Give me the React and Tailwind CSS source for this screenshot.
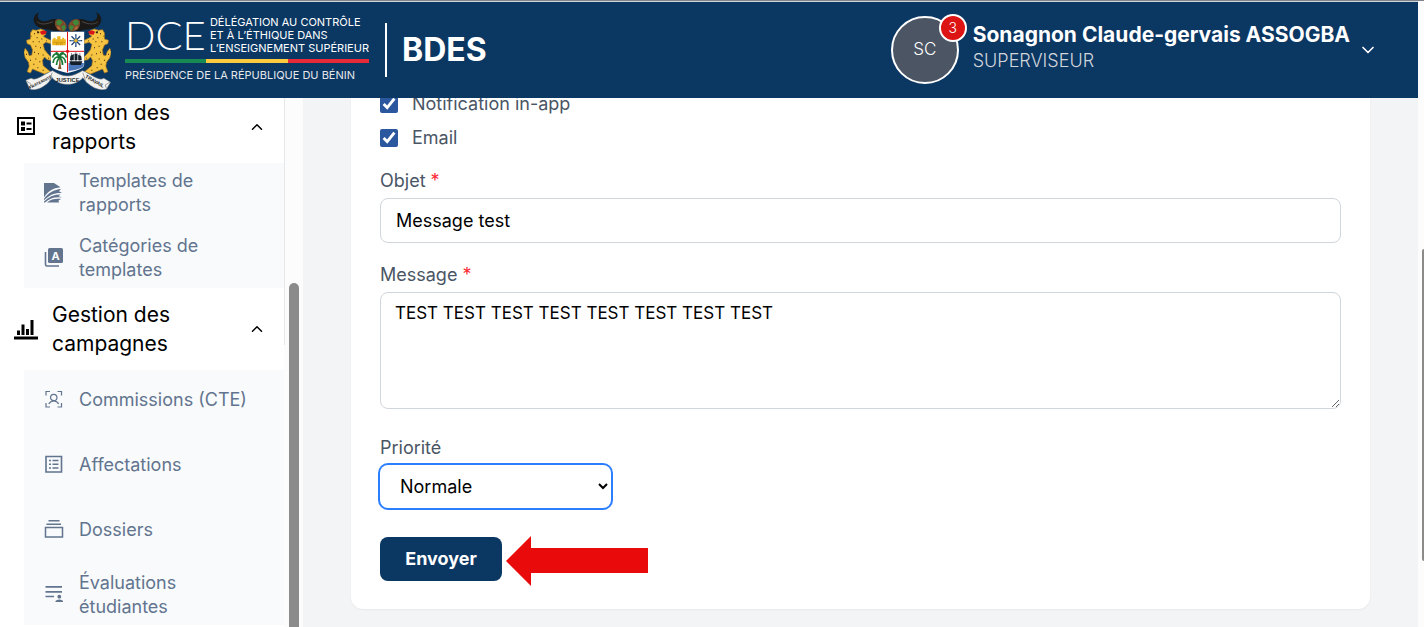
import React, { useState } from 'react'
import { ChevronDown, ChevronUp } from 'lucide-react'
import { ImStatsBars } from 'react-icons/im'

const Leopard = () => (
  <g>
    <path
      d="M46 84 L52 74 L64 76 L76 72 L88 76 L92 88 L84 94 L94 100 L107 106 L107 116 L92 112 L84 118 L88 134 L98 146 L107 156 L107 166 L96 164 L88 156 L82 166 L84 182 L96 192 L106 200 L88 207 L66 198 L52 192 L46 204 L36 200 L42 184 L40 172 L30 158 L26 142 L30 130 L38 140 L42 152 L50 150 L52 134 L46 120 L36 116 L34 106 L46 102 Z"
      fill="#f5c443"
      stroke="#a8741c"
      strokeWidth="2"
    />
    <path
      d="M58 84 v4 M66 96 v4 M54 108 v4 M72 108 v4 M62 122 v4 M76 126 v4 M58 140 v4 M70 144 v4 M84 148 v4 M62 160 v4 M74 168 v4 M56 176 v4 M68 186 v4 M84 194 v4 M94 106 v3 M46 164 v4 M34 146 v4 M48 92 v3 M80 100 v4 M100 158 v3"
      stroke="#6b4a12"
      strokeWidth="3"
    />
    <path d="M74 80 l10 -4 l12 4 l-6 8 l-11 1 z" fill="#d8141c" />
    <path d="M66 78 l6 2 v5 h-6 z" fill="#2a1c10" />
  </g>
)

const Horn = () => (
  <g>
    <path
      d="M71 22 C56 28 50 48 62 60 C74 74 100 72 118 78 L140 78 C144 62 136 44 122 42 C106 40 94 52 80 48 C68 44 65 34 71 22 Z"
      fill="#1b1918"
    />
    <path d="M66 50 C78 62 98 56 114 50" fill="none" stroke="#4a4643" strokeWidth="3" />
    <path d="M122 44 C134 38 148 44 154 60 C156 72 150 80 142 80 L128 74 C120 66 116 54 122 44 Z" fill="#7a4a28" />
    <path d="M124 48 l10 -4 l8 8 l-8 10 l-10 -4 z M138 64 l10 -4 l4 10 l-8 8 z" fill="#3f8a3a" />
    <path d="M126 64 l8 2 l2 8 l-8 -2 z M144 52 l5 4" fill="#b5653a" stroke="#b5653a" />
  </g>
)

const Emblem = () => (
  <svg viewBox="27 15 260 240" className="h-20 w-[87px] shrink-0" role="img" aria-label="Armoiries du Bénin">
    <Leopard />
    <g transform="translate(314 0) scale(-1 1)">
      <Leopard />
    </g>
    <path d="M107 80 H207 V178 C207 190 192 196 157 204 C122 196 107 190 107 178 Z" fill="#fff" />
    <path d="M160 174 H206 V180 C204 189 190 194 160 198 Z" fill="#4a78b8" />
    <Horn />
    <g transform="translate(314 0) scale(-1 1)">
      <Horn />
    </g>
    {/* castle */}
    <path d="M111 103 h4 v-5 h6 v5 h5 v-9 h10 v9 h5 v-5 h6 v5 h5 v18 h-41 z" fill="#eeb51e" />
    <path d="M114 112 h36 M124 121 v-6 h5 v6 M136 121 v-6 h5 v6" fill="none" stroke="#b88210" strokeWidth="1.5" />
    {/* star */}
    <path d="M182 88 V126 M163 107 H201 M169 94 L195 120 M195 94 L169 120" stroke="#24446e" strokeWidth="4" />
    <path d="M182 92 V122 M167 107 H197" stroke="#7bb0dc" strokeWidth="2" />
    <circle cx="182" cy="107" r="5" fill="#eeb51e" />
    {/* palm tree */}
    <path d="M132 158 C133 172 132 182 128 192 H139 C136 180 136 170 136 158 Z" fill="#8a5a2c" />
    <path
      d="M133 156 C124 140 114 148 112 158 M133 156 C122 154 114 162 114 174 M133 156 C128 164 124 170 124 180 M133 156 C142 138 152 148 154 158 M133 156 C144 154 152 164 151 174 M133 156 C140 164 143 170 142 180 M133 156 C132 148 126 143 121 143 M133 156 C134 148 140 143 146 143"
      fill="none"
      stroke="#197a35"
      strokeWidth="5"
    />
    {/* ship */}
    <path d="M162 169 h40 l-5 11 h-30 z M166 152 l10 -5 v19 h-12 z M178 146 h9 v20 h-9 z M189 149 l9 4 l2 13 h-11 z" fill="#16202c" />
    <path d="M169 144 v26 M182 141 v28 M194 144 v26" stroke="#16202c" strokeWidth="1.5" />
    <path d="M157 80 V202 M107 139 H207" stroke="#e0121c" strokeWidth="3" />
    <circle cx="157" cy="139" r="5" fill="#e0121c" />
    {/* ribbon */}
    <path
      d="M32 226 L48 220 C62 230 88 206 112 197 C126 206 142 213 157 213 C172 213 188 206 202 197 C226 206 252 230 266 220 L286 232 L274 252 C254 258 234 250 214 232 L203 218 C190 232 174 238 157 238 C140 238 124 232 111 218 L100 232 C82 250 60 258 44 252 Z"
      fill="#f2f2f0"
      stroke="#8d8d8d"
      strokeWidth="1.5"
    />
    <path d="M34 228 l14 10 l-6 11 M284 232 l-14 8 l4 10 M111 203 l-8 24 M203 203 l8 24" fill="none" stroke="#777" strokeWidth="2" />
    <g fill="#222" fontFamily="Liberation Sans, sans-serif" fontSize="17" fontWeight="700" textAnchor="middle">
      <text transform="translate(78 235) rotate(-27)" fontSize="12">FRATERNITÉ</text>
      <text x="157" y="232">JUSTICE</text>
      <text transform="translate(236 233) rotate(30)" fontSize="15">TRAVAIL</text>
    </g>
  </svg>
)

const RapportsIcon = ({ className }) => (
  <svg viewBox="0 0 24 24" fill="currentColor" className={className}>
    <path d="M4 3 H20 V19 H4 Z" fill="none" stroke="currentColor" strokeWidth="2" />
    <path d="M7 6.500 h4 v4 h-4 z M7 12 h4 v4 h-4 z M12.500 7.500 h5 v2 h-5 z M12.500 13 h5 v2 h-5 z" />
  </svg>
)

const TemplatesIcon = ({ className }) => (
  <svg viewBox="0 0 20 20" fill="currentColor" className={className}>
    <path d="M0 0 H10 L16.500 4.300 C9 5 3 9 0 14.500 Z" />
    <path d="M0 16 C4 10 10 6.500 17 6 L15 8.300 L18 10 C11 9.500 5 12 0 17.300 Z" />
    <path d="M0 18.500 C5 13.500 11 11 16.500 11.500 L14.500 13 L18 14.500 C11 13.500 6 15 1 19.500 H0 Z" />
    <path d="M3 19.500 C7 16 12 15.500 17 16 L14.500 17.500 L15 19.500 Z" />
  </svg>
)

const CategoriesIcon = ({ className }) => (
  <svg viewBox="0 0 20 20" fill="currentColor" className={className}>
    <path d="M1.500 4 V16.500 Q1.500 18 3 18 H15" fill="none" stroke="currentColor" strokeWidth="1.600" />
    <rect x="4" y="0" width="15" height="15" rx="1.500" />
    <text x="11.500" y="11.500" fontFamily="Inter, sans-serif" fontSize="11" fontWeight="700" textAnchor="middle" fill="#f8fafc">A</text>
  </svg>
)

const CommissionsIcon = ({ className }) => (
  <svg viewBox="0 0 20 20" fill="none" stroke="currentColor" strokeWidth="1.200" className={className}>
    <path d="M6 1.500 H2 V5.500 M13.500 1.500 H17.500 V5.500 M17.500 13 V17 H13.500 M6 17 H2 V13" />
    <circle cx="9.750" cy="7.500" r="3.200" />
    <path d="M4.800 14 C6 11.800 7.700 10.800 9.750 10.800 S13.500 11.800 14.700 14" />
  </svg>
)

const AffectationsIcon = ({ className }) => (
  <svg viewBox="0 0 20 20" fill="none" stroke="currentColor" strokeWidth="1.600" className={className}>
    <path d="M2 1.500 H17.500 V17 H2 Z M5 5.500 h2 M8.500 5.500 h6 M5 9.250 h2 M8.500 9.250 h6 M5 13 h2 M8.500 13 h6" />
  </svg>
)

const DossiersIcon = ({ className }) => (
  <svg viewBox="0 0 20 20" fill="none" stroke="currentColor" strokeWidth="1.500" className={className}>
    <path d="M4.500 0.800 H15.500 M2.500 4.300 H17 M1.500 7.500 H18.500 V17 H1.500 Z" />
  </svg>
)

const EvaluationsIcon = ({ className }) => (
  <svg viewBox="0 0 20 20" fill="currentColor" className={className}>
    <path d="M1.500 1 H18 V2.700 H1.500 Z M1.500 6 H18 V7.700 H1.500 Z M1.500 10.700 H10 V12.300 H1.500 Z" />
    <circle cx="15.300" cy="11.700" r="1.900" />
    <path d="M11.500 17 V16 Q12.500 14.500 15.300 14.500 T19 16 V17 Z" />
  </svg>
)

const menu = [
  {
    title: 'Gestion des rapports',
    icon: RapportsIcon,
    height: 'h-[73px]',
    items: [
      { label: 'Templates de rapports', icon: TemplatesIcon },
      { label: 'Catégories de templates', icon: CategoriesIcon },
    ],
  },
  {
    title: 'Gestion des campagnes',
    icon: ImStatsBars,
    height: 'h-[82px]',
    items: [
      { label: 'Commissions (CTE)', icon: CommissionsIcon },
      { label: 'Affectations', icon: AffectationsIcon },
      { label: 'Dossiers', icon: DossiersIcon },
      { label: 'Évaluations étudiantes', icon: EvaluationsIcon },
    ],
  },
]

const Header = () => (
  <header className="relative z-10 flex h-24 shrink-0 items-center justify-between bg-[#0b3763] pr-10 pl-6 text-white">
    <div className="flex items-center">
      <Emblem />
      <div className="ml-3.5 w-[244px]">
        <div className="flex items-center justify-between">
          <span className="font-[Lato] text-[40px] leading-10 font-light">DCE</span>
          <p className="text-[11px] leading-[13px] whitespace-nowrap">
            DÉLÉGATION AU CONTRÔLE
            <br />
            ET À L’ÉTHIQUE DANS
            <br />
            L’ENSEIGNEMENT SUPÉRIEUR
          </p>
        </div>
        <div className="mt-1 flex h-1">
          <div className="flex-1 bg-[#178a54]" />
          <div className="flex-1 bg-[#fbcb3d]" />
          <div className="flex-1 bg-[#e62a38]" />
        </div>
        <p className="mt-1 mb-0.5 text-[11px] leading-4 whitespace-nowrap text-gray-200">
          PRÉSIDENCE DE LA RÉPUBLIQUE DU BÉNIN
        </p>
      </div>
      <div className="ml-4 h-[54px] w-0.5 bg-white" />
      <h1 className="ml-[15px] text-[32px] leading-10 font-bold">BDES</h1>
    </div>

    <button className="flex items-center text-left">
      <span className="relative flex h-[68px] w-[68px] items-center justify-center rounded-full border-2 border-white bg-[#4b5563] text-[17px] font-light">
        SC
        <span className="absolute -top-1 -right-2.5 flex h-7 w-7 items-center justify-center rounded-full border-2 border-white bg-[#dc1414] text-sm">
          3
        </span>
      </span>
      <span className="ml-3.5 flex flex-col pb-1.5">
        <span className="text-[21px] leading-7 font-bold">Sonagnon Claude-gervais ASSOGBA</span>
        <span className="text-lg leading-6 font-light text-gray-300">SUPERVISEUR</span>
      </span>
      <ChevronDown className="ml-2 h-5 w-5" strokeWidth={2} />
    </button>
  </header>
)

const MenuGroup = ({ group }) => {
  const [open, setOpen] = useState(true)
  const Icon = group.icon

  return (
    <section>
      <button
        onClick={() => setOpen(!open)}
        className={`flex w-full items-center pr-[18px] pl-3.5 text-left text-[21px] leading-[29px] text-black ${group.height}`}
      >
        <Icon className="h-6 w-6 shrink-0" />
        <span className="ml-3.5 w-36">{group.title}</span>
        <ChevronUp className="ml-auto h-[18px] w-[18px]" strokeWidth={2} />
      </button>
      {open && (
        <ul className="ml-6 bg-[#f8fafc]">
          {group.items.map(({ label, icon: ItemIcon }) => (
            <li key={label} className="pb-[5px] last:pb-0">
              <a href="#" className="flex h-[60px] items-center pl-5 text-lg leading-6 text-slate-500">
                <ItemIcon className="h-5 w-5 shrink-0" />
                <span className="ml-[15px] max-w-44 flex-1">{label}</span>
              </a>
            </li>
          ))}
        </ul>
      )}
    </section>
  )
}

const Sidebar = () => (
  <aside className="flex w-[303px] shrink-0 bg-white">
    <nav className="-mt-2 flex-1">
      {menu.map((group) => (
        <MenuGroup key={group.title} group={group} />
      ))}
    </nav>
    <div className="flex w-[19px] flex-col bg-[#fcfcfc]">
      <div className="h-[247px] border-l border-gray-200" />
    </div>
  </aside>
)

const Required = () => <span className="text-red-500">*</span>

const MessageForm = () => (
  <form
    onSubmit={(e) => e.preventDefault()}
    className="-mt-1.5 flex flex-col items-start rounded-b-xl bg-white px-[29px] pb-7 text-lg leading-6 text-gray-600 shadow-xs"
  >
    <div className="flex flex-col gap-2.5">
      {['Notification in-app', 'Email'].map((label) => (
        <label key={label} className="flex items-center gap-3.5">
          <input type="checkbox" defaultChecked className="h-[18px] w-[18px] accent-[#2b579f]" />
          {label}
        </label>
      ))}
    </div>

    <label htmlFor="objet" className="mt-[19px]">
      Objet <Required />
    </label>
    <input
      id="objet"
      defaultValue="Message test"
      className="mt-[5px] h-[45px] w-full rounded-lg border border-gray-300 px-[15px] text-black"
    />

    <label htmlFor="message" className="mt-5">
      Message <Required />
    </label>
    <textarea
      id="message"
      defaultValue="TEST TEST TEST TEST TEST TEST TEST TEST"
      className="mt-[5px] h-[117px] w-full rounded-lg border border-gray-300 px-3.5 py-2 text-[17px] leading-6 text-black"
    />

    <label htmlFor="priorite" className="mt-[27px]">
      Priorité
    </label>
    <select
      id="priorite"
      className="mt-[5px] h-[43px] w-[231px] rounded-lg bg-white px-4 text-black ring-2 ring-blue-500"
    >
      <option>Normale</option>
      <option>Haute</option>
    </select>

    <div className="mt-[29px] flex h-11 items-center gap-1">
      <button type="submit" className="h-11 w-[122px] rounded-lg bg-[#0b3763] font-bold text-white">
        Envoyer
      </button>
      <svg viewBox="0 -4 142 54" className="h-[54px] w-[142px]" fill="#e90b0b">
        <path d="M0 25 L25 0 V12 H142 V37 H25 V50 Z" />
      </svg>
    </div>
  </form>
)

const App = () => (
  <div className="flex h-screen overflow-hidden border-t border-[#83838b] bg-[#fcfcfc] font-[Inter,sans-serif]">
    <div className="flex min-w-0 flex-1 flex-col border-t border-gray-300">
      <Header />
      <div className="flex min-h-0 flex-1 overflow-hidden">
        <Sidebar />
        <main className="flex-1 bg-[#f3f4f6] px-12">
          <MessageForm />
        </main>
      </div>
    </div>
    <div className="w-1.5 shrink-0" />

    {/* Scroll thumbs, over the page */}
    <div className="absolute top-[283px] bottom-0 left-[289px] w-2.5 rounded-t-full bg-[#8b8b8b]" />
    <div className="absolute top-[249px] right-0 h-[312px] w-0.5 rounded-l-full bg-[#8b8b8b]" />
  </div>
)

export default App
